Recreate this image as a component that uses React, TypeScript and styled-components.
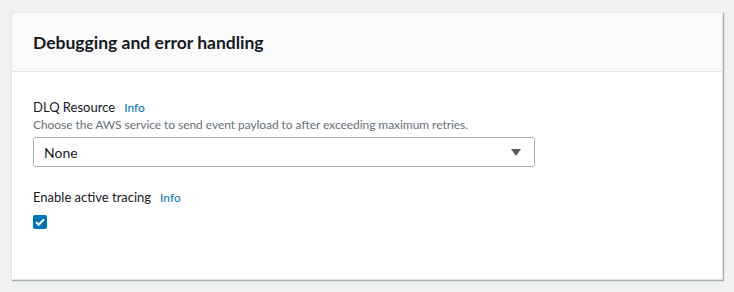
import styled, { createGlobalStyle } from "styled-components";

const GlobalStyle = createGlobalStyle`
  body {
    margin: 0;
    background: #f0f1f1;
    font-family: "Lato", "Liberation Sans", sans-serif;
    color: #16191f;
  }
`;

export default function App() {
  return (
    <Page>
      <GlobalStyle />
      <Card>
        <CardHeader>
          <Title>Debugging and error handling</Title>
        </CardHeader>
        <CardBody>
          <Field>
            <LabelRow>
              <Label>DLQ Resource</Label>
              <InfoLink>Info</InfoLink>
            </LabelRow>
            <Description>
              Choose the AWS service to send event payload to after exceeding maximum retries.
            </Description>
            <Select>
              <span>None</span>
              <Caret viewBox="0 0 10 7">
                <path d="M0 0h10L5 7z" />
              </Caret>
            </Select>
          </Field>
          <Field>
            <LabelRow>
              <Label>Enable active tracing</Label>
              <InfoLink>Info</InfoLink>
            </LabelRow>
            <Checkbox>
              <svg viewBox="0 0 14 14" width="14" height="14">
                <path d="M3 7.2l2.6 2.6L11 4.4" fill="none" stroke="#fff" strokeWidth="2" />
              </svg>
            </Checkbox>
          </Field>
        </CardBody>
      </Card>
    </Page>
  );
}

const Page = styled.div`
  padding: 12px 12px 13px 11px;
`;
const Card = styled.div`
  background: #fff;
  border: 1px solid #e1e4e4;
  border-top-color: #e6e8e8;
  box-shadow: 1px 1px 1px 0 rgba(0, 28, 36, 0.3);
  width: 710px;
`;
const CardHeader = styled.div`
  background: #fafafa;
  border-bottom: 1px solid #e5e7e7;
  height: 58px;
  display: flex;
  align-items: center;
  padding: 0 21px;
`;
const Title = styled.h2`
  margin: 0;
  font-size: 17.5px;
  font-weight: 700;
  color: #16191f;
`;
const CardBody = styled.div`
  padding: 25px 21px 50px;
  display: flex;
  flex-direction: column;
  gap: 20px;
`;
const Field = styled.div`
  display: flex;
  flex-direction: column;
`;
const LabelRow = styled.div`
  display: flex;
  align-items: baseline;
  gap: 9px;
`;
const Label = styled.label`
  font-size: 13px;
  color: #16191f;
  line-height: 20px;
`;
const InfoLink = styled.a`
  font-size: 12px;
  color: #0073bb;
  font-weight: 400;
`;
const Description = styled.div`
  font-size: 12px;
  letter-spacing: -0.06px;
  color: #687078;
  line-height: 16px;
  margin-bottom: 4px;
`;
const Select = styled.div`
  width: 502px;
  height: 30px;
  box-sizing: border-box;
  border: 1px solid #aab7b8;
  border-radius: 2px;
  display: flex;
  align-items: center;
  justify-content: space-between;
  padding: 0 13px 0 10px;
  font-size: 14px;
  color: #16191f;
`;
const Caret = styled.svg`
  width: 10px;
  height: 7px;
  fill: #545b64;
`;
const Checkbox = styled.div`
  width: 14px;
  height: 14px;
  margin-top: 8px;
  border-radius: 2px;
  background: #0073bb;
  display: flex;
`;
